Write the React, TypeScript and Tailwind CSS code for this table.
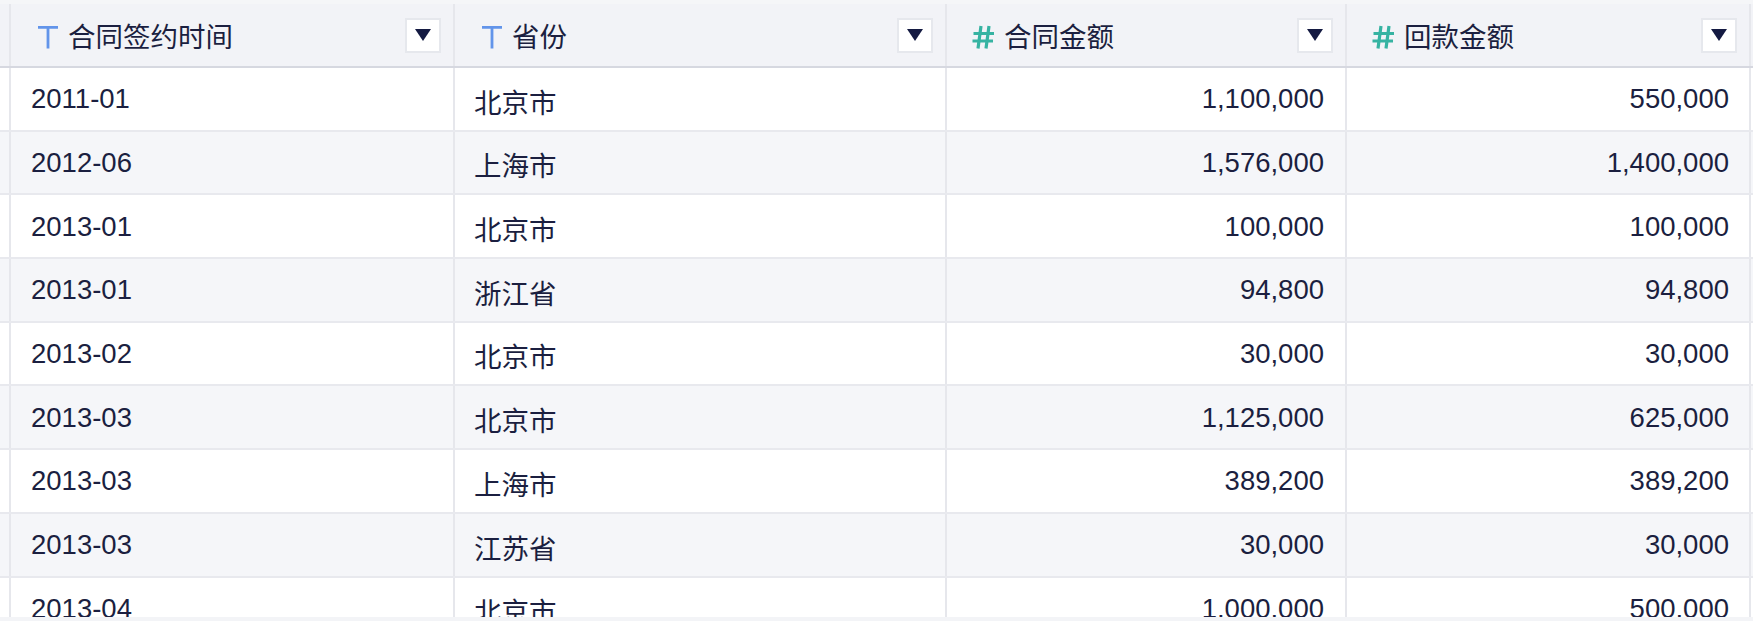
import React from 'react';

interface Row {
  month: string;
  province: string;
  contract: string;
  paid: string;
}

const rows: Row[] = [
  { month: '2011-01', province: '北京市', contract: '1,100,000', paid: '550,000' },
  { month: '2012-06', province: '上海市', contract: '1,576,000', paid: '1,400,000' },
  { month: '2013-01', province: '北京市', contract: '100,000', paid: '100,000' },
  { month: '2013-01', province: '浙江省', contract: '94,800', paid: '94,800' },
  { month: '2013-02', province: '北京市', contract: '30,000', paid: '30,000' },
  { month: '2013-03', province: '北京市', contract: '1,125,000', paid: '625,000' },
  { month: '2013-03', province: '上海市', contract: '389,200', paid: '389,200' },
  { month: '2013-03', province: '江苏省', contract: '30,000', paid: '30,000' },
  { month: '2013-04', province: '北京市', contract: '1,000,000', paid: '500,000' },
];

const TextIcon = () => (
  <svg width="22" height="24" viewBox="0 0 22 24" className="shrink-0 mt-[3px]">
    <path d="M1 2.3H21M11 2.3V23.5" stroke="#6294ea" strokeWidth="2.8" fill="none" />
  </svg>
);

const NumberIcon = () => (
  <svg width="24" height="24" viewBox="0 0 24 24" className="shrink-0 mt-[3px]">
    <path
      d="M10 1L7 23.5M18 1L15 23.5M2.5 8.5H23M1.5 16H22"
      stroke="#36b3a2"
      strokeWidth="3.2"
      fill="none"
    />
  </svg>
);

const DropButton = () => (
  <div className="w-[36px] h-[35px] border-2 border-[#e6e8ed] bg-white flex items-center justify-center shrink-0">
    <svg width="16" height="12" viewBox="0 0 16 12">
      <path d="M0 0H16L8 12Z" fill="#141a42" />
    </svg>
  </div>
);

const HeaderCell = ({ label, kind }: { label: string; kind: 'text' | 'number' }) => (
  <div
    className={`flex items-center h-full border-r-2 border-[#e6e7ec] ${
      kind === 'text' ? 'pl-[26px]' : 'pl-[24px]'
    } pr-[12px]`}
  >
    {kind === 'text' ? <TextIcon /> : <NumberIcon />}
    <span className="ml-[9px] pt-[5px] flex-1 text-[27.5px] text-[#1b1f40]">{label}</span>
    <DropButton />
  </div>
);

const cols = 'grid grid-cols-[11px_444px_492px_400px_404px]';

export default function App() {
  return (
    <div
      className="w-[1753px] h-[621px] overflow-hidden bg-[#f5f6f8] flex flex-col"
      style={{ fontFamily: '"Liberation Sans", "Noto Sans CJK SC", Arial, sans-serif' }}
    >
      <div className="h-[617px] overflow-hidden pt-[4px]">
        {/* header */}
        <div className={`${cols} h-[64px] bg-[#f2f3f7] border-b-2 border-[#d6d8e0]`}>
          <div className="border-r-2 border-[#e6e7ec]" />
          <HeaderCell label="合同签约时间" kind="text" />
          <HeaderCell label="省份" kind="text" />
          <HeaderCell label="合同金额" kind="number" />
          <HeaderCell label="回款金额" kind="number" />
        </div>

        {/* body */}
        {rows.map((r, i) => (
          <div
            key={i}
            className={`${cols} h-[63.7px] border-b-2 border-[#e8e9ee] text-[27.5px] text-[#1b1f40] ${
              i % 2 === 1 ? 'bg-[#f5f6f9]' : 'bg-white'
            }`}
          >
            <div className="border-r-2 border-[#e6e7ec]" />
            <div className="flex items-center pl-[20px] border-r-2 border-[#e6e7ec]">{r.month}</div>
            <div className="flex items-center pl-[19px] pt-[9px] border-r-2 border-[#e6e7ec]">{r.province}</div>
            <div className="flex items-center justify-end pr-[21px] border-r-2 border-[#e6e7ec]">{r.contract}</div>
            <div className="flex items-center justify-end pr-[20px] border-r-2 border-[#e6e7ec]">{r.paid}</div>
          </div>
        ))}
      </div>
      <div className="h-[4px] bg-[#f3f4f7]" />
    </div>
  );
}
